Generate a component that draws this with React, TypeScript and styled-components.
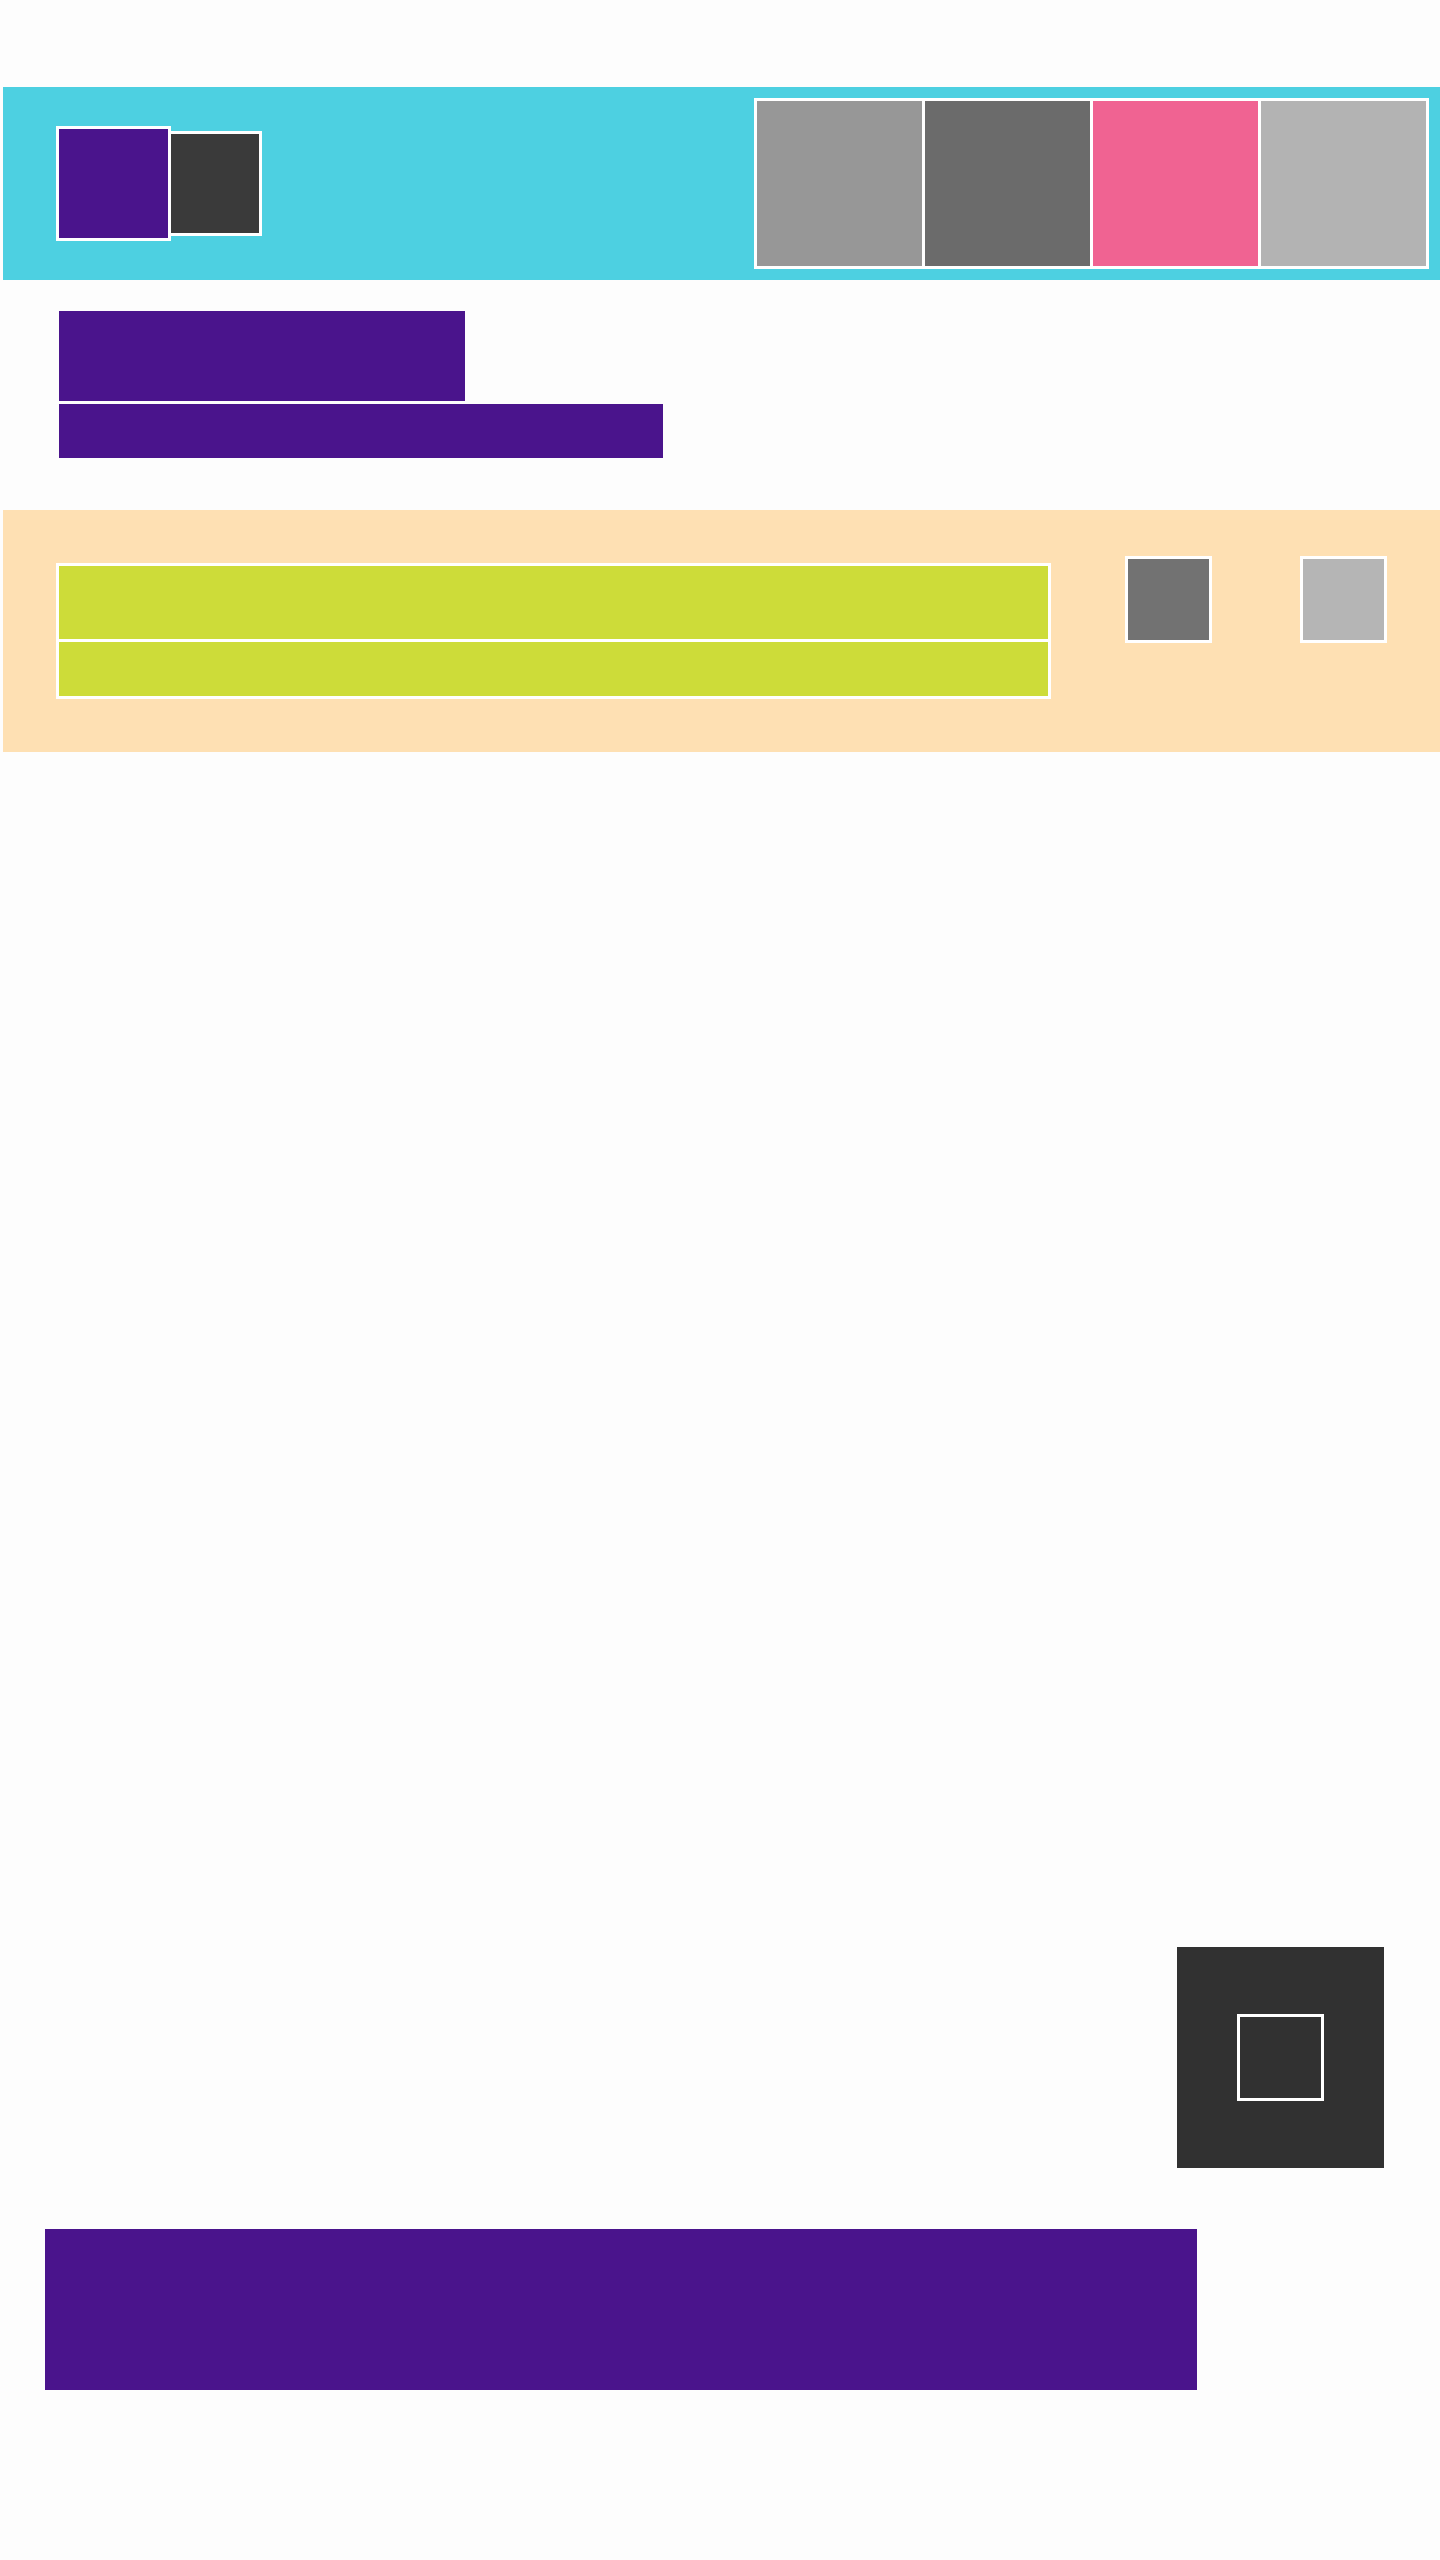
import { createGlobalStyle } from "styled-components";
import styled from "styled-components";

const GlobalStyle = createGlobalStyle`
  * {
    box-sizing: border-box;
  }

  body {
    margin: 0;
    background: #fdfdfd;
    font-family: "Liberation Sans", Arial, sans-serif;
  }
`;

const Page = styled.div`
  display: flex;
  flex-direction: column;
  min-height: 2560px;
  padding-top: 87px;
`;

const Header = styled.header`
  margin-left: 3px;
  height: 193px;
  background: #4dd0e1;
  display: flex;
  align-items: center;
  justify-content: space-between;
  padding: 0 11px 0 53px;
`;

const Logo = styled.div`
  display: flex;
  align-items: center;
`;

const LogoMark = styled.div`
  width: 115px;
  height: 115px;
  border: 3px solid #fff;
  background: #4a148c;
`;

const LogoType = styled.div`
  width: 94px;
  height: 105px;
  margin-left: -3px;
  border: 3px solid #fff;
  background: #3a3a3a;
`;

const Nav = styled.nav`
  display: flex;
  gap: 3px;
  padding: 3px;
  background: #fff;
`;

const NavItem = styled.div<{ $color: string }>`
  width: 165px;
  height: 165px;
  background: ${(p) => p.$color};
`;

const Intro = styled.section`
  display: flex;
  flex-direction: column;
  align-items: flex-start;
  gap: 3px;
  padding: 31px 0 0 59px;
`;

const Title = styled.h1`
  margin: 0;
  width: 406px;
  height: 90px;
  background: #4a148c;
`;

const Subtitle = styled.p`
  margin: 0;
  width: 604px;
  height: 54px;
  background: #4a148c;
`;

const Band = styled.section`
  margin: 52px 0 0 3px;
  height: 242px;
  background: #fee0b3;
  display: flex;
  align-items: center;
  padding: 0 53px;
`;

const Panel = styled.div`
  width: 995px;
  display: flex;
  flex-direction: column;
  gap: 3px;
  padding: 3px;
  background: #fff;
`;

const PanelRow = styled.div<{ $h: number }>`
  height: ${(p) => p.$h}px;
  background: #cddc39;
`;

const Tile = styled.div<{ $color: string; $gap: number }>`
  align-self: flex-start;
  margin-top: 46px;
  margin-left: ${(p) => p.$gap}px;
  width: 87px;
  height: 87px;
  border: 3px solid #fff;
  background: ${(p) => p.$color};
`;

const Aside = styled.aside`
  margin-top: auto;
  align-self: flex-end;
  margin-right: 56px;
  width: 207px;
  height: 221px;
  background: #313131;
  display: flex;
  align-items: center;
  justify-content: center;
`;

const Frame = styled.div`
  width: 87px;
  height: 87px;
  border: 3px solid #fff;
`;

const Footer = styled.footer`
  margin: 61px 0 170px 45px;
  width: 1152px;
  height: 161px;
  background: #4a148c;
`;

export default function App() {
  return (
    <>
      <GlobalStyle />
      <Page>
        <Header>
          <Logo>
            <LogoMark />
            <LogoType />
          </Logo>
          <Nav>
            <NavItem $color="#979797" />
            <NavItem $color="#6b6b6b" />
            <NavItem $color="#f06392" />
            <NavItem $color="#b3b3b3" />
          </Nav>
        </Header>
        <Intro>
          <Title />
          <Subtitle />
        </Intro>
        <Band>
          <Panel>
            <PanelRow $h={73} />
            <PanelRow $h={54} />
          </Panel>
          <Tile $color="#727272" $gap={74} />
          <Tile $color="#b5b5b5" $gap={88} />
        </Band>
        <Aside>
          <Frame />
        </Aside>
        <Footer />
      </Page>
    </>
  );
}
